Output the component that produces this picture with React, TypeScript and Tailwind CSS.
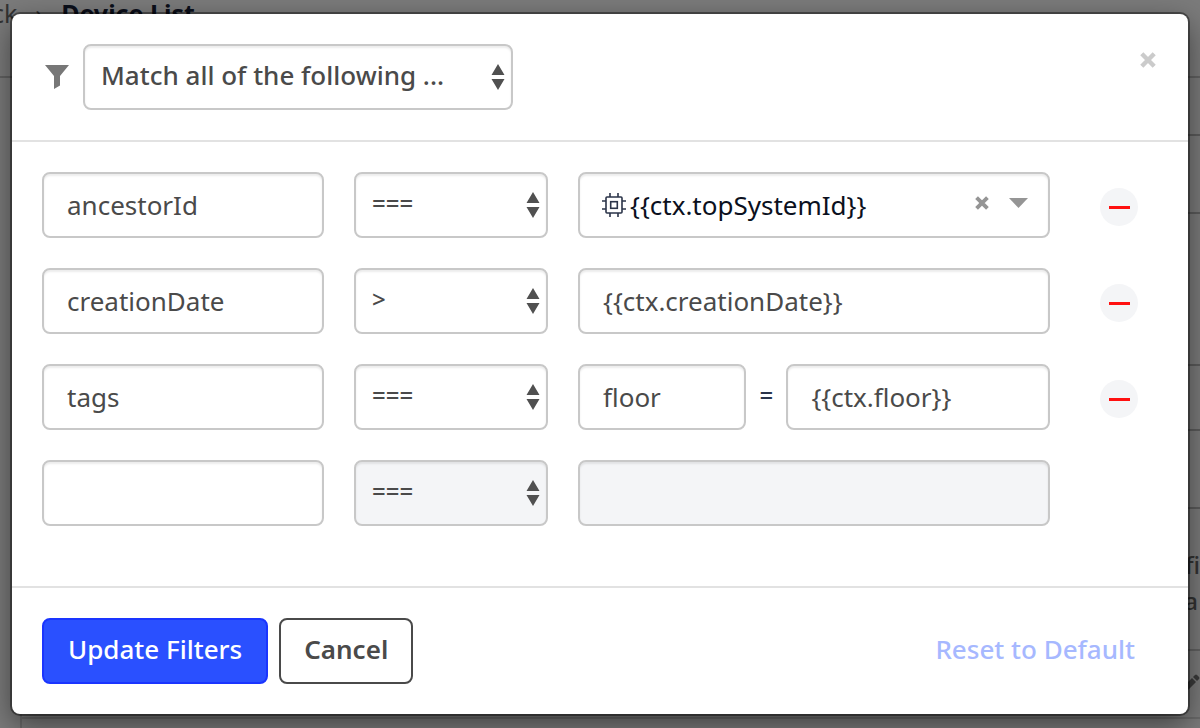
import { useState } from "react"

const inputClass =
  "h-[66px] w-full min-w-0 rounded-lg border-2 border-[#c8c8c8] bg-white px-[23px] text-[26px] text-[#4a4a4a] shadow-[inset_0_2px_2px_rgba(0,0,0,0.08)] outline-none disabled:bg-[#f4f5f7]"
const selectClass =
  "h-[66px] w-full appearance-none rounded-lg border-2 border-[#c8c8c8] bg-white pl-4 pr-12 pb-1 font-medium text-[#4a4a4a] shadow-[inset_0_2px_2px_rgba(0,0,0,0.08)] outline-none disabled:bg-[#f4f5f7] disabled:opacity-100"

function Select({ label, options, size, disabled }: { label: string; options: string[]; size: string; disabled?: boolean }) {
  return (
    <div className="relative w-full">
      <select aria-label={label} disabled={disabled} className={`${selectClass} ${size}`}>
        {options.map((o) => (
          <option key={o}>{o}</option>
        ))}
      </select>
      <svg className="pointer-events-none absolute right-2 top-5 h-[26px] w-[14px]" viewBox="0 0 14 26" fill="#505050" aria-hidden="true">
        <path d="M7 0l6.500 11H.5zM7 26L.5 15h13z" />
      </svg>
    </div>
  )
}

function Cross({ className }: { className: string }) {
  return (
    <svg className={className} viewBox="0 0 16 16" fill="none" stroke="currentColor" strokeWidth="4.4" aria-hidden="true">
      <path d="M1.800 1.800l12.400 12.400M14.200 1.800L1.800 14.200" />
    </svg>
  )
}

function Chip() {
  return (
    <svg className="h-[26px] w-6 shrink-0" viewBox="0 0 24 26" fill="none" stroke="#2b3449" strokeWidth="1.6" aria-hidden="true">
      <rect x="4" y="5" width="16" height="16" rx="1" />
      <rect x="8.7" y="9.7" width="6.6" height="6.6" />
      <path d="M8 1v4M16 1v4M8 21v4M16 21v4M0 9h4M0 17h4M20 9h4M20 17h4" />
    </svg>
  )
}

function RemoveButton() {
  return (
    <button type="button" aria-label="Remove filter" className="mt-1 flex size-[38px] items-center justify-center rounded-full bg-[#f4f5f7]">
      <span className="h-[3px] w-[21px] bg-[#ff1010]" />
    </button>
  )
}

// the page that lies dimmed under the dialog
function Backdrop() {
  return (
    <div aria-hidden="true" className="absolute inset-0 overflow-hidden bg-[#7b7b7b] text-[#333]">
      <div className="flex h-[78px] items-start gap-[18px] border-b-2 border-[#626262] text-[25px] leading-[26px]">
        <span className="-ml-2">ck</span>
        <span>›</span>
        <span className="font-bold text-[#0b0f1a]">Device List</span>
      </div>
      <div className="ml-5 h-full border-l-2 border-[#6a6a6a]">
        <div className="h-[58px] border-b-2 border-[#5c5c5c]" />
        <div className="h-[78px] border-b-2 border-[#5c5c5c]" />
        <div className="h-[152px] border-b-2 border-[#5c5c5c]" />
        <div className="h-[65px] border-b-2 border-[#5c5c5c]" />
        <div className="h-[78px] border-b-2 border-[#5c5c5c]" />
        <div className="flex h-[142px] flex-col items-end border-b-2 border-[#626262] pt-[38px] text-2xl font-medium leading-9">
          <span>fi</span>
          <span className="mr-[2px]">a</span>
        </div>
        <div className="flex h-[68px] justify-end border-b-2 border-[#6a6a6a] pt-5">
          <svg className="size-5" viewBox="0 0 20 20" fill="#3c3c3c">
            <path d="M3 20v-4L12 7l4 4-9 9zM13 6l2-2q1-1 2 0l2 2q1 1 0 2l-2 2z" />
          </svg>
        </div>
      </div>
    </div>
  )
}

export default function App() {
  const [keys, setKeys] = useState(["ancestorId", "creationDate", "tags", ""])
  const [date, setDate] = useState("{{ctx.creationDate}}")
  const [tag, setTag] = useState("floor")
  const [tagValue, setTagValue] = useState("{{ctx.floor}}")
  const operators = ["===", ">", "==="]

  const keyInput = (i: number) => (
    <input
      aria-label={`Attribute ${i + 1}`}
      className={inputClass}
      value={keys[i]}
      onChange={(e) => setKeys(keys.map((k, j) => (j === i ? e.target.value : k)))}
    />
  )

  const values = [
    <div className="flex h-[66px] items-center rounded-lg border-2 border-[#c8c8c8] pl-[22px] pr-5 shadow-[inset_0_2px_2px_rgba(0,0,0,0.08)]">
      <Chip />
      <span className="ml-1 grow text-[26px] text-[#0b1020]">{"{{ctx.topSystemId}}"}</span>
      <button type="button" aria-label="Clear value" className="mb-1 text-[#959595]">
        <Cross className="size-[14px]" />
      </button>
      <button type="button" aria-label="Show values" className="mb-1 ml-5">
        <svg className="h-[10px] w-[19px]" viewBox="0 0 19 10" fill="#959595">
          <path d="M0 0h19L9.500 10z" />
        </svg>
      </button>
    </div>,
    <input aria-label="Value" className={inputClass} value={date} onChange={(e) => setDate(e.target.value)} />,
    <div className="flex items-center">
      <div className="flex-[168]">
        <input aria-label="Tag name" className={inputClass} value={tag} onChange={(e) => setTag(e.target.value)} />
      </div>
      <span className="w-10 pb-1 text-center text-2xl font-medium text-[#2b3449]">=</span>
      <div className="flex-[263]">
        <input aria-label="Tag value" className={inputClass} value={tagValue} onChange={(e) => setTagValue(e.target.value)} />
      </div>
    </div>,
  ]

  return (
    <div className="relative min-h-screen px-3 py-[14px] font-['Noto_Sans',sans-serif]">
      <Backdrop />
      <div
        role="dialog"
        aria-label="Filters"
        className="relative rounded-lg bg-white shadow-[0_0_0_2px_rgba(0,0,0,0.4),0_10px_30px_rgba(0,0,0,0.5)]"
      >
        <header className="flex items-start border-b-2 border-[#e2e2e2] px-8 pb-[30px] pt-[30px]">
          <svg className="mr-[13px] mt-5 size-[26px]" viewBox="0 0 26 26" fill="#777" aria-hidden="true">
            <path d="M1 1h24l-9 11v9.500L10 25V12z" />
          </svg>
          <div className="w-[430px]">
            <Select label="Match mode" options={["Match all of the following ...", "Match any of the following ..."]} size="text-[26px]" />
          </div>
          <button type="button" aria-label="Close" className="ml-auto mt-2 text-[#cbcbcb]">
            <Cross className="size-4" />
          </button>
        </header>

        <form className="flex flex-col gap-[30px] pb-[60px] pl-[30px] pt-[30px]">
          {values.map((value, i) => (
            <div key={i} className="grid grid-cols-[282fr_194fr_472fr_108px] items-center gap-x-[30px]">
              {keyInput(i)}
              <Select label="Operator" options={[operators[i], "!=="]} size="text-2xl" />
              {value}
              <div className="pl-5">
                <RemoveButton />
              </div>
            </div>
          ))}
          <div className="grid grid-cols-[282fr_194fr_472fr_108px] items-center gap-x-[30px]">
            {keyInput(3)}
            <Select label="Operator" options={["==="]} size="text-2xl" disabled />
            <input aria-label="Value" className={inputClass} disabled />
          </div>
        </form>

        <footer className="flex items-center border-t-2 border-[#e2e2e2] px-[30px] py-[30px] text-[26px]">
          <button type="button" className="h-[66px] rounded-lg border-2 border-[#1a35ff] bg-[#2a50ff] px-6 pb-1 font-medium text-white">
            Update Filters
          </button>
          <button type="button" className="ml-[11px] h-[66px] rounded-lg border-2 border-[#4a4a4a] px-[23px] pb-1 font-semibold text-[#4a4a4a]">
            Cancel
          </button>
          <button type="button" className="ml-auto px-[23px] pb-1 font-medium text-[#a6b8ff]">
            Reset to Default
          </button>
        </footer>
      </div>
    </div>
  )
}
